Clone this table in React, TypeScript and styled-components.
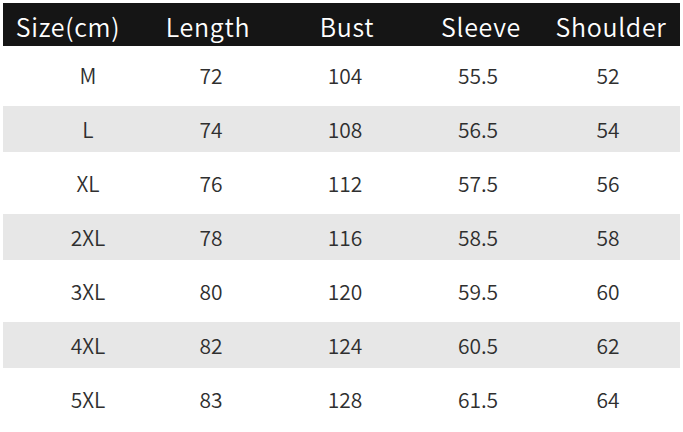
import React from "react";
import styled, { createGlobalStyle } from "styled-components";

const Global = createGlobalStyle`
  html, body { margin: 0; padding: 0; background: #ffffff; }
  body { font-family: "Noto Sans CJK SC", "Noto Sans", sans-serif; }
`;

const Page = styled.div`
  width: 683px;
  height: 432px;
  padding: 3px 3px 0 3px;
  box-sizing: border-box;
  display: flex;
  flex-direction: column;
`;

const HeaderRow = styled.div`
  height: 43px;
  background: #151515;
  display: grid;
  grid-template-columns: 130px 150px 128px 140px 120px;
  align-items: center;
  padding-right: 9px;
  margin-bottom: 2px;
`;

const HeaderCell = styled.div`
  color: #ffffff;
  font-size: 25px;
  font-weight: 350;
  letter-spacing: 0.7px;
  text-align: center;
  white-space: nowrap;
  line-height: 1;
  padding-top: 3px;
`;

const RowSlot = styled.div`
  height: 54px;
  padding: 4px 0;
  box-sizing: border-box;
  display: flex;
`;

const RowInner = styled.div<{ $shaded: boolean }>`
  flex: 1;
  background: ${(p) => (p.$shaded ? "#e7e7e7" : "#ffffff")};
  display: grid;
  grid-template-columns: 128px 118px 150px 116px 144px;
  padding-left: 21px;
  align-items: center;
`;

const Cell = styled.div`
  color: #2f2f2f;
  font-size: 21px;
  font-weight: 350;
  text-align: center;
  line-height: 1;
`;

const headers = ["Size(cm)", "Length", "Bust", "Sleeve", "Shoulder"];
const rows = [
  ["M", "72", "104", "55.5", "52"],
  ["L", "74", "108", "56.5", "54"],
  ["XL", "76", "112", "57.5", "56"],
  ["2XL", "78", "116", "58.5", "58"],
  ["3XL", "80", "120", "59.5", "60"],
  ["4XL", "82", "124", "60.5", "62"],
  ["5XL", "83", "128", "61.5", "64"],
];

export default function App() {
  return (
    <>
      <Global />
      <Page>
        <HeaderRow>
          {headers.map((h) => (
            <HeaderCell key={h}>{h}</HeaderCell>
          ))}
        </HeaderRow>
        {rows.map((r, i) => (
          <RowSlot key={r[0]}>
            <RowInner $shaded={i % 2 === 1}>
              {r.map((c, j) => (
                <Cell key={j}>{c}</Cell>
              ))}
            </RowInner>
          </RowSlot>
        ))}
      </Page>
    </>
  );
}
